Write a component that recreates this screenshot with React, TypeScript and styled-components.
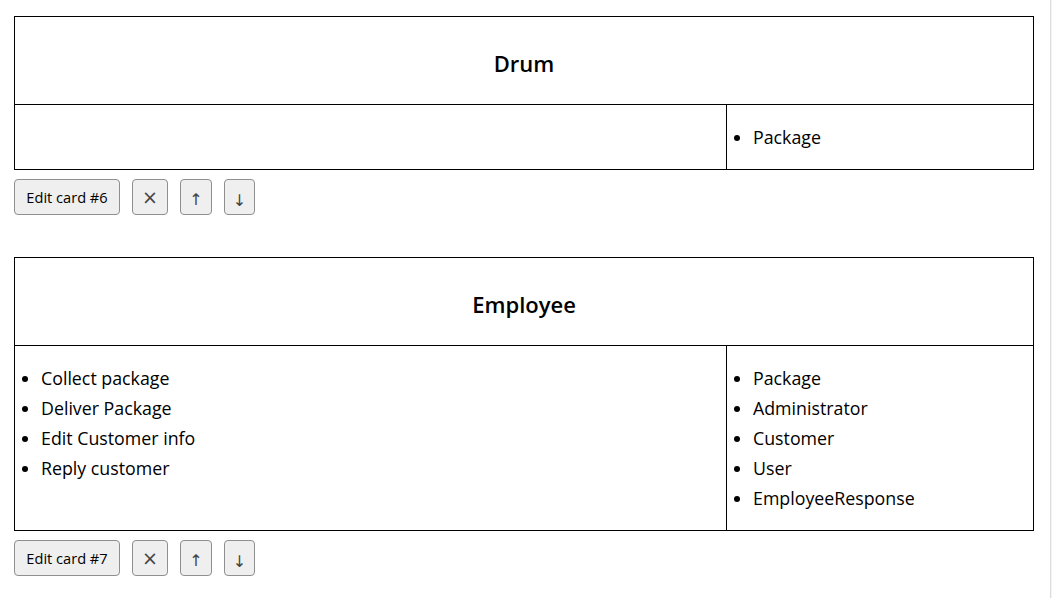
import React from "react";
import styled, { createGlobalStyle } from "styled-components";

const Global = createGlobalStyle`
  html, body { margin: 0; padding: 0; background: #fff; }
  body { font-family: "Open Sans", "Noto Sans", sans-serif; color: #000; }
`;

const Page = styled.div`
  display: flex;
  min-height: 598px;
`;

const Main = styled.main`
  width: 1020px;
  flex-shrink: 0;
  padding: 16px 16px 0 14px;
  display: flex;
  flex-direction: column;
  gap: 42px;
`;

const Edge = styled.div`
  width: 2px;
  margin-left: auto;
  border-left: 1px solid #dcdcdc;
  background: #f4f4f4;
`;

const CardBlock = styled.section`
  display: flex;
  flex-direction: column;
  gap: 9px;
`;

const Card = styled.div`
  display: grid;
  grid-template-columns: 712px 1fr;
  border: 1px solid #000;
`;

const Title = styled.h2`
  grid-column: 1 / span 2;
  margin: 0;
  padding: 31px 0 26px;
  text-align: center;
  font-size: 22px;
  font-weight: 600;
  line-height: 30px;
  border-bottom: 1px solid #000;
`;

const Cell = styled.div<{ $divider?: boolean }>`
  border-right: ${(p) => (p.$divider ? "1px solid #000" : "none")};
`;

const List = styled.ul`
  margin: 17px 0;
  padding-left: 26px;
  font-size: 17.8px;
  line-height: 30px;
`;

const Actions = styled.div`
  display: flex;
  gap: 12px;
`;

const Btn = styled.button<{ $w?: number }>`
  height: 36px;
  width: ${(p) => (p.$w ? `${p.$w}px` : "auto")};
  padding: 0 12px;
  white-space: nowrap;
  font-family: "Open Sans", "Noto Sans", sans-serif;
  font-size: 14.6px;
  color: #000;
  background: #efefef;
  border: 1px solid #8f8f8f;
  border-radius: 4px;
  display: flex;
  align-items: center;
  justify-content: center;
`;

const IconBtn = styled(Btn)<{ $size: number; $shift?: number }>`
  padding: 0;
  font-family: "DejaVu Sans", "Liberation Sans", sans-serif;
  font-size: ${(p) => p.$size}px;
  color: #444;
  & > span {
    display: block;
    transform: translateY(${(p) => p.$shift ?? 0}px);
  }
`;

type CardData = { id: number; title: string; left: string[]; right: string[] };

const cards: CardData[] = [
  { id: 6, title: "Drum", left: [], right: ["Package"] },
  {
    id: 7,
    title: "Employee",
    left: ["Collect package", "Deliver Package", "Edit Customer info", "Reply customer"],
    right: ["Package", "Administrator", "Customer", "User", "EmployeeResponse"],
  },
];

const Items = ({ items }: { items: string[] }) =>
  items.length ? (
    <List>
      {items.map((t) => (
        <li key={t}>{t}</li>
      ))}
    </List>
  ) : (
    <List as="div" />
  );

export default function App() {
  return (
    <>
      <Global />
      <Page>
        <Main>
          {cards.map((c) => (
            <CardBlock key={c.id}>
              <Card>
                <Title>{c.title}</Title>
                <Cell $divider>
                  <Items items={c.left} />
                </Cell>
                <Cell>
                  <Items items={c.right} />
                </Cell>
              </Card>
              <Actions>
                <Btn $w={106}>Edit card #{c.id}</Btn>
                <IconBtn $w={36} $size={19}><span>×</span></IconBtn>
                <IconBtn $w={32} $size={16} $shift={2}><span>↑</span></IconBtn>
                <IconBtn $w={31} $size={16} $shift={3}><span>↓</span></IconBtn>
              </Actions>
            </CardBlock>
          ))}
        </Main>
        <Edge />
      </Page>
    </>
  );
}
